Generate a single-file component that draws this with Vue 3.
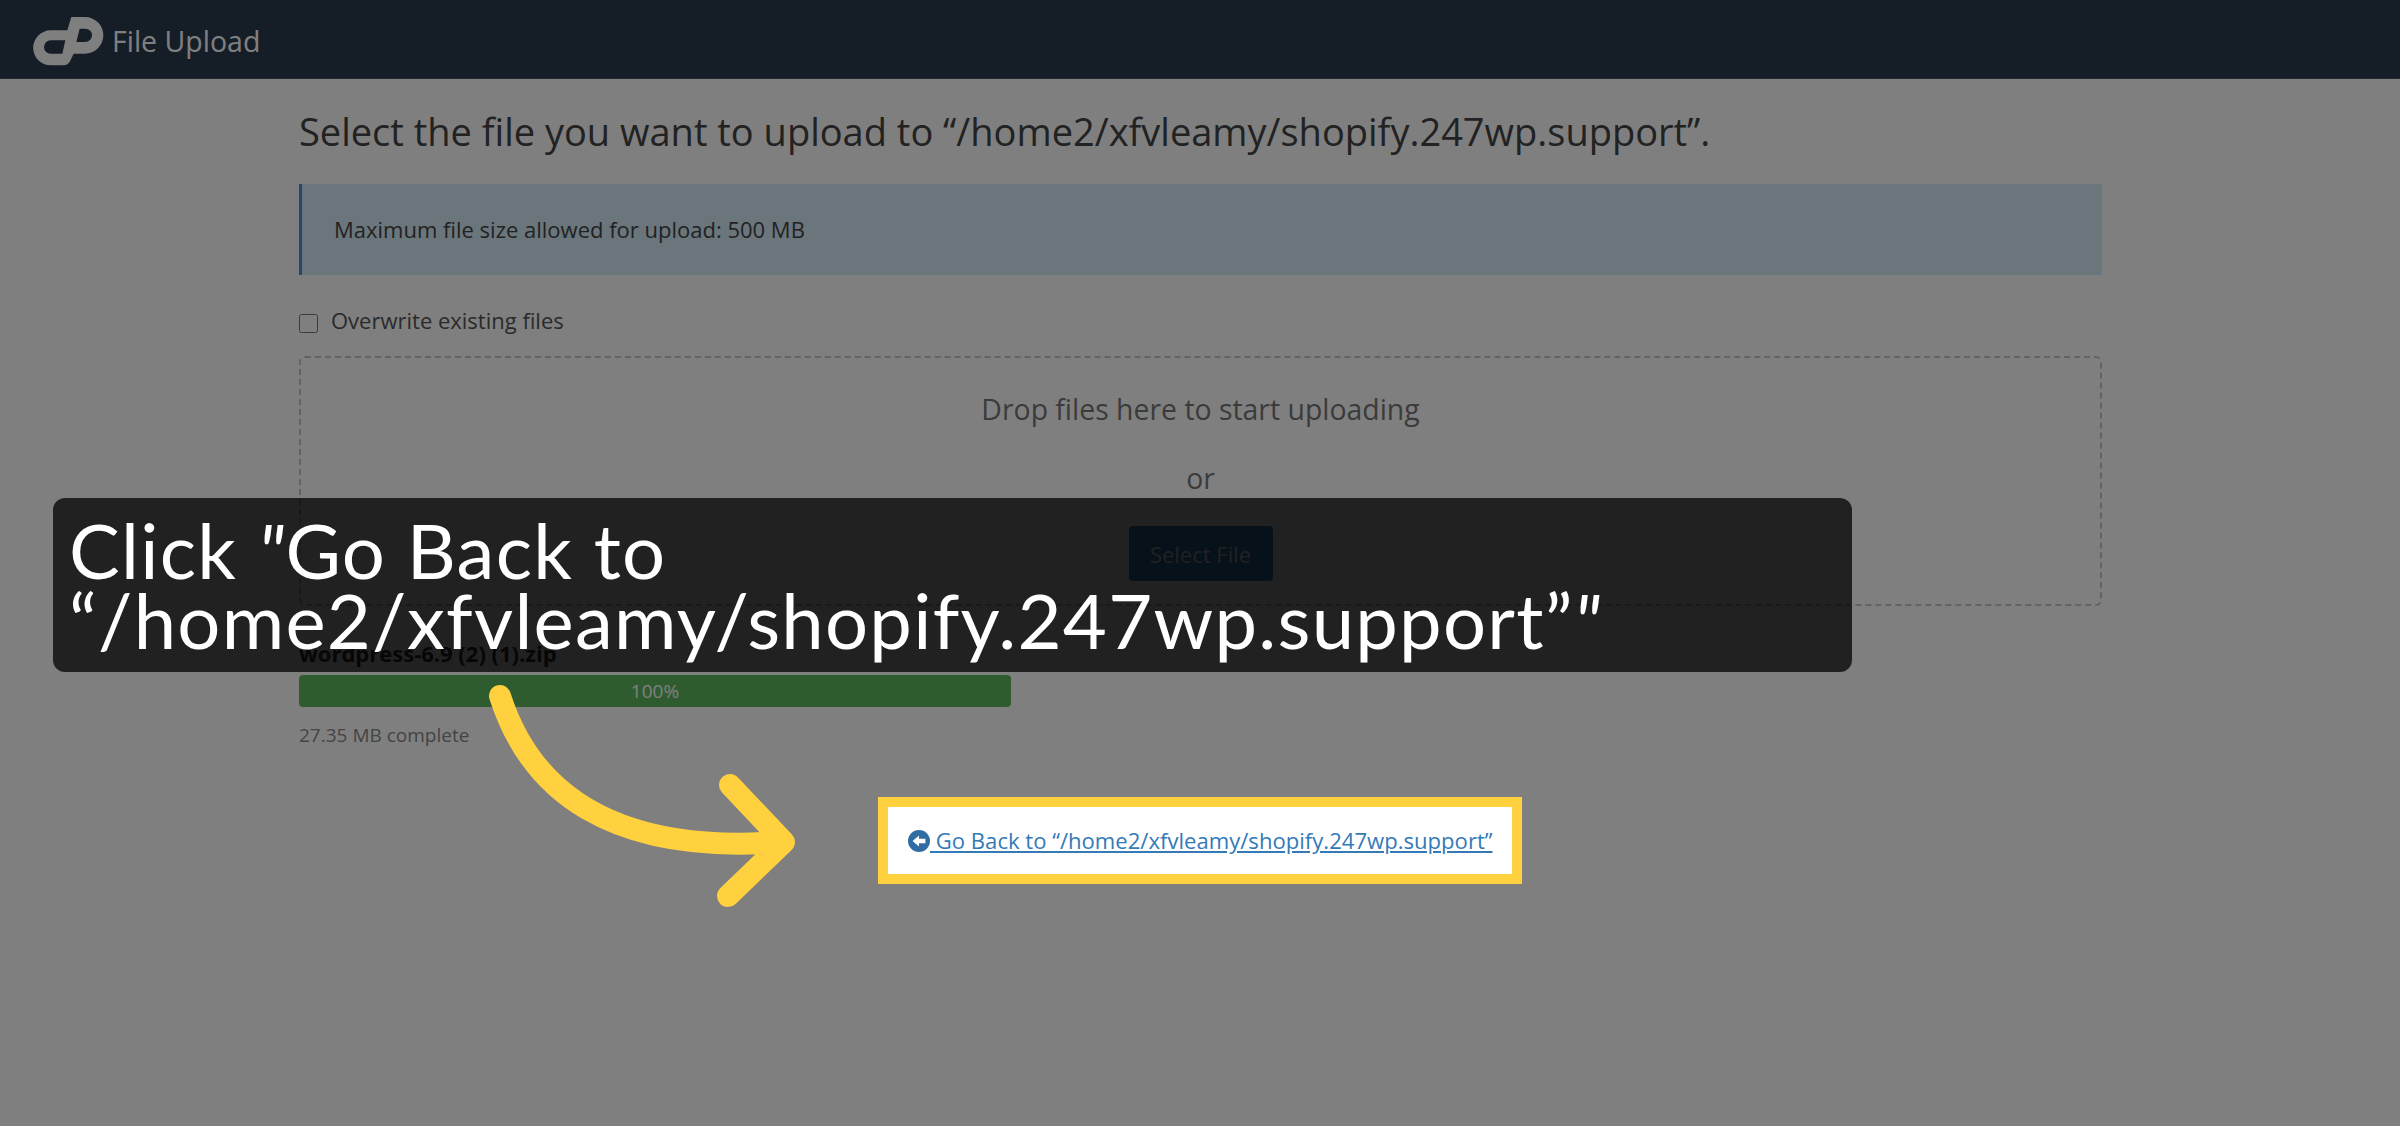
<script setup>
const uploadPath = "/home2/xfvleamy/shopify.247wp.support";
const upload = { name: "wordpress-6.9 (2) (1).zip", percent: 100, size: "27.35 MB" };
</script>

<template>
    <div class="page">
        <header class="topbar">
            <svg class="logo" viewBox="0 0 252 180">
                <path
                    fill="#fff"
                    fill-rule="evenodd"
                    d="M118 55 L68 55 A52.5 52.5 0 0 0 68 160 L106 160 Q120 160 126 148 L137 125 L171 125 A55 55 0 0 0 171 15 L130 15 Z M155 50 L172 50 A20 20 0 0 1 172 90 L145 90 Z M103 125 L68 125 A20 20 0 0 1 68 85 L112 85 Z"
                />
            </svg>
            <span class="title">File Upload</span>
        </header>

        <main class="content">
            <h1 class="heading">Select the file you want to upload to “{{ uploadPath }}”.</h1>
            <div class="alert">Maximum file size allowed for upload: 500 MB</div>
            <label class="overwrite">
                <input type="checkbox" />
                <span>Overwrite existing files</span>
            </label>
            <div class="dropzone">
                <p class="drop-text">Drop files here to start uploading</p>
                <p class="drop-or">or</p>
                <button class="select-btn">Select File</button>
            </div>
            <div class="file-name">{{ upload.name }}</div>
            <div class="progress">
                <div class="progress-bar" :style="{ width: upload.percent + '%' }">{{ upload.percent }}%</div>
            </div>
            <div class="file-size">{{ upload.size }} complete</div>
        </main>

        <div class="dim"></div>

        <div class="spotlight">
            <a class="back-link" href="#">
                <svg class="back-icon" viewBox="0 0 24 24">
                    <circle cx="12" cy="12" r="12" fill="#2f6ca3" />
                    <path fill="#fff" d="M5 12 L12 6 V9.5 H19 V14.5 H12 V18 Z" />
                </svg>
                Go Back to “{{ uploadPath }}”
            </a>
        </div>

        <div class="callout">Click <i class="quote">"</i>Go Back to “{{ uploadPath }}”<i class="quote">"</i></div>

        <svg class="arrow" viewBox="0 0 320 240" fill="none">
            <path
                d="M20 16 C50 110 130 175 300 162 M250 105 L304 162 L248 216"
                stroke="#ffd13f"
                stroke-width="22"
                stroke-linecap="round"
                stroke-linejoin="round"
            />
        </svg>
    </div>
</template>

<style scoped>
.page {
    position: relative;
    height: 1126px;
    overflow: hidden;
    background: #fff;
    font-family: "Open Sans", sans-serif;
    color: #444;
}

.topbar {
    display: flex;
    align-items: center;
    box-sizing: border-box;
    height: 79px;
    padding-left: 28px;
    background: #2b3a4e;
    border-bottom: 1px solid #4a5564;
}

.logo {
    width: 84px;
    height: 60px;
    margin-top: 5px;
}

.title {
    margin-top: 4px;
    font-size: 28.5px;
    color: #fff;
}

.content {
    padding: 0 298px 0 299px;
}

.heading {
    margin: 28px 0 29px;
    font-size: 38px;
    line-height: 48px;
    font-weight: 400;
    color: #444;
}

.alert {
    display: flex;
    align-items: center;
    box-sizing: border-box;
    height: 91px;
    padding: 0 0 2px 32px;
    background: #d6edf9;
    border-left: 3px solid #4a90d9;
    font-size: 22px;
    color: #444;
}

.overwrite {
    display: flex;
    align-items: center;
    gap: 13px;
    margin-top: 29px;
    height: 32px;
    font-size: 22px;
    color: #555;
}

.overwrite input {
    width: 19px;
    height: 19px;
    margin: 7px 0 0;
}

.dropzone {
    display: flex;
    flex-direction: column;
    align-items: center;
    box-sizing: border-box;
    height: 250px;
    margin-top: 20px;
    border: 2px dashed #c6c6c6;
    border-radius: 6px;
}

.drop-text {
    margin: 32px 0 0;
    font-size: 28.4px;
    line-height: 38px;
    color: #777;
}

.drop-or {
    margin: 31px 0 0;
    font-size: 28.4px;
    line-height: 38px;
    color: #777;
}

.select-btn {
    width: 144px;
    height: 55px;
    margin-top: 29px;
    border: none;
    border-radius: 4px;
    background: #3682c8;
    font-family: inherit;
    font-size: 22px;
    color: #fff;
}

.file-name {
    margin-top: 33px;
    font-size: 22px;
    line-height: 28px;
    font-weight: 700;
    color: #333;
}

.progress {
    width: 712px;
    height: 32px;
    margin-top: 8px;
    border-radius: 4px;
    overflow: hidden;
    background: #f5f5f5;
}

.progress-bar {
    height: 100%;
    background: #5cb85c;
    text-align: center;
    font-size: 19px;
    line-height: 32px;
    color: #fff;
}

.file-size {
    margin-top: 16px;
    font-size: 19px;
    line-height: 24px;
    color: #888;
}

.dim {
    position: absolute;
    inset: 0;
    background: rgba(0, 0, 0, 0.5);
}

.spotlight {
    position: absolute;
    left: 878px;
    top: 797px;
    box-sizing: border-box;
    width: 644px;
    height: 87px;
    padding: 17px 0 0 20px;
    background: #fff;
    border: 10px solid #ffd13f;
}

.back-link {
    font-size: 22.1px;
    line-height: 32px;
    color: #337ab7;
    text-decoration: underline;
    white-space: nowrap;
}

.back-icon {
    width: 22px;
    height: 22px;
    vertical-align: -3px;
}

.callout {
    position: absolute;
    left: 53px;
    top: 498px;
    box-sizing: border-box;
    width: 1799px;
    height: 174px;
    padding: 17px 16px;
    border-radius: 12px;
    background: rgba(0, 0, 0, 0.74);
    font-family: "Lato", sans-serif;
    font-size: 76px;
    line-height: 70px;
    letter-spacing: 1.25px;
    color: #fff;
}

.quote {
    font-style: italic;
}

.arrow {
    position: absolute;
    left: 480px;
    top: 680px;
    width: 320px;
    height: 240px;
}
</style>
